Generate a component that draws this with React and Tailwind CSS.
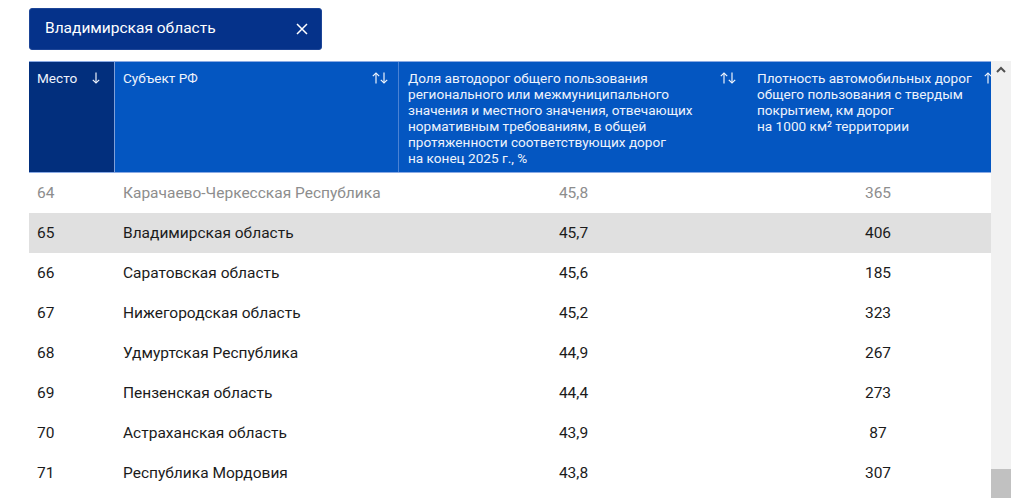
import React from "react";

const rows = [
  ["64", "Карачаево-Черкесская Республика", "45,8", "365", "muted"],
  ["65", "Владимирская область", "45,7", "406", "active"],
  ["66", "Саратовская область", "45,6", "185", ""],
  ["67", "Нижегородская область", "45,2", "323", ""],
  ["68", "Удмуртская Республика", "44,9", "267", ""],
  ["69", "Пензенская область", "44,4", "273", ""],
  ["70", "Астраханская область", "43,9", "87", ""],
  ["71", "Республика Мордовия", "43,8", "307", ""],
];

function ArrowDown() {
  return (
    <svg width="8" height="12" viewBox="0 0 8 12" fill="none" stroke="currentColor" strokeWidth="1.2">
      <path d="M4 0.5V11" />
      <path d="M0.8 7.8L4 11L7.2 7.8" />
    </svg>
  );
}
function ArrowUp() {
  return (
    <svg width="8" height="12" viewBox="0 0 8 12" fill="none" stroke="currentColor" strokeWidth="1.2">
      <path d="M4 11.5V1" />
      <path d="M0.8 4.2L4 1L7.2 4.2" />
    </svg>
  );
}
function SortIcon() {
  return (
    <span className="flex items-center">
      <ArrowUp />
      <ArrowDown />
    </span>
  );
}

export default function App() {
  return (
    <div
      className="w-[1024px] h-[498px] overflow-hidden bg-white"
      style={{ fontFamily: "Roboto, 'Liberation Sans', sans-serif" }}
    >
      <div className="pt-[8px] pl-[29px]">
        <div className="w-[293px] h-[42px] rounded-[3px] bg-[#05328a] border border-[#1d4597] flex items-center justify-between pl-[15px] pr-[13px] text-white">
          <span className="text-[15.5px] leading-none">Владимирская область</span>
          <svg width="12" height="12" viewBox="0 0 12 12" stroke="white" strokeWidth="1.5" fill="none">
            <path d="M1 1L11 11M11 1L1 11" />
          </svg>
        </div>
      </div>

      <div className="mt-[11px] ml-[29px] flex h-[437px]">
        <div className="w-[962px] overflow-hidden">
          <div className="w-[981px]">
            <div className="flex h-[112px] text-[13.6px] leading-[16px] text-[#eef3fc] border-t border-b border-[#8aaae4]">
              <div className="w-[85px] shrink-0 bg-[#022f7d] flex justify-between pl-[8px] pr-[14px] pt-[8px]">
                <span>Место</span>
                <span className="mt-[2px]"><ArrowDown /></span>
              </div>
              <div className="w-[284px] shrink-0 bg-[#0456c1] border-l border-[#7f9fd8] flex justify-between pl-[8px] pr-[10px] pt-[8px]">
                <span>Субъект РФ</span>
                <span className="mt-[2px]"><SortIcon /></span>
              </div>
              <div className="w-[348px] shrink-0 bg-[#0456c1] border-l border-[#4a82d4] flex justify-between pl-[9px] pr-[10px] pt-[8px]">
                <span className="whitespace-nowrap">
                  Доля автодорог общего пользования<br />
                  регионального или межмуниципального<br />
                  значения и местного значения, отвечающих<br />
                  нормативным требованиям, в общей<br />
                  протяженности соответствующих дорог<br />
                  на конец 2025 г., %
                </span>
                <span className="mt-[2px]"><SortIcon /></span>
              </div>
              <div className="w-[264px] shrink-0 bg-[#0456c1] flex justify-between pl-[11px] pr-[10px] pt-[8px]">
                <span className="whitespace-nowrap">
                  Плотность автомобильных дорог<br />
                  общего пользования с твердым<br />
                  покрытием, км дорог<br />
                  на 1000 км² территории
                </span>
                <span className="mt-[2px]"><SortIcon /></span>
              </div>
            </div>
            {rows.map(([n, name, v1, v2, kind]) => (
              <div
                key={n}
                className={
                  "flex h-[40px] items-center pt-[2px] text-[15.5px] " +
                  (kind === "active"
                    ? "bg-[#e0e0e0] text-[#1b1b1b]"
                    : kind === "muted"
                    ? "bg-white text-[#8d8d8d]"
                    : "bg-white text-[#1b1b1b]")
                }
              >
                <div className="w-[85px] shrink-0 pl-[8px]">{n}</div>
                <div className="w-[284px] shrink-0 pl-[9px]">{name}</div>
                <div className="w-[348px] shrink-0 text-center pl-[3px]">{v1}</div>
                <div className="w-[264px] shrink-0 text-center">{v2}</div>
              </div>
            ))}
          </div>
        </div>
        <div className="w-[20px] h-full bg-[#f1f1f1] flex flex-col">
          <div className="h-[17px] flex items-center justify-center">
            <svg width="10" height="7" viewBox="0 0 10 7" fill="none" stroke="#505050" strokeWidth="2">
              <path d="M1 6L5 2L9 6" />
            </svg>
          </div>
          <div className="flex-1" />
          <div className="h-[29px] bg-[#c1c1c1]" />
        </div>
      </div>
    </div>
  );
}
